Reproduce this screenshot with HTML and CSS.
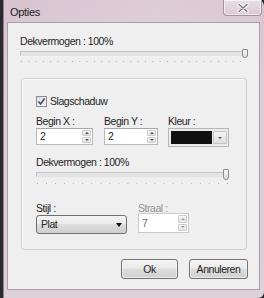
FILE: index.html
```html
<!DOCTYPE html>
<html>
<head>
<meta charset="utf-8">
<link rel="stylesheet" href="styles.css">
</head>
<body>
<div class="window">
  <div class="titlebar">
    <span class="title">Opties</span>
    <div class="close">
      <svg width="12" height="10" viewBox="0 0 12 10"><path d="M2 1.5 L10 8.5 M10 1.5 L2 8.5" stroke="#fff" stroke-width="3.2" stroke-linecap="round"/><path d="M2 1.5 L10 8.5 M10 1.5 L2 8.5" stroke="#7a6a76" stroke-width="1.3" stroke-linecap="round"/></svg>
    </div>
  </div>
  <div class="client">
    <div class="label top-label">Dekvermogen : 100%</div>
    <div class="slider slider-wide">
      <div class="track"></div>
      <div class="thumb"></div>
    </div>
    <div class="ticks ticks-wide"></div>

    <div class="group">
      <div class="check">
        <span class="box"><svg width="9" height="9" viewBox="0 0 9 9"><path d="M1.5 4.5 L3.6 7 L7.6 1.5" fill="none" stroke="#3b4f7a" stroke-width="1.6"/></svg></span>
        <span class="label">Slagschaduw</span>
      </div>
      <div class="row row-top">
        <div class="field">
          <div class="label">Begin X :</div>
          <div class="spin w-x">
            <span class="val">2</span>
            <div class="spinbtns"><span class="up"></span><span class="down"></span></div>
          </div>
        </div>
        <div class="field">
          <div class="label">Begin Y :</div>
          <div class="spin w-y">
            <span class="val">2</span>
            <div class="spinbtns"><span class="up"></span><span class="down"></span></div>
          </div>
        </div>
        <div class="field field-color">
          <div class="label">Kleur :</div>
          <div class="color">
            <span class="swatch"></span>
            <span class="drop"><span class="tri-small"></span></span>
          </div>
        </div>
      </div>
      <div class="label mid-label">Dekvermogen : 100%</div>
      <div class="slider slider-inner">
        <div class="track"></div>
        <div class="thumb"></div>
      </div>
      <div class="ticks ticks-inner"></div>
      <div class="row row-bottom">
        <div class="field">
          <div class="label">Stijl :</div>
          <div class="select"><span class="val">Plat</span><span class="tri"></span></div>
        </div>
        <div class="field disabled">
          <div class="label">Straal :</div>
          <div class="spin w-s">
            <span class="val">7</span>
            <div class="spinbtns"><span class="up"></span><span class="down"></span></div>
          </div>
        </div>
      </div>
    </div>

    <div class="buttons">
      <div class="btn btn-ok">Ok</div>
      <div class="btn btn-cancel">Annuleren</div>
    </div>
  </div>
</div>
</body>
</html>
```

FILE: styles.css
```css
* { box-sizing: border-box; }
html, body { margin: 0; padding: 0; }
body {
  width: 264px;
  height: 298px;
  overflow: hidden;
  background: #2c2a2e;
  font-family: "Liberation Sans", Arial, sans-serif;
  font-size: 10.5px;
  letter-spacing: -0.45px;
  color: #1e1e1e;
}
.window {
  margin-left: 3px;
  width: 261px;
  height: 298px;
  background: linear-gradient(180deg, #d9c3d0 0%, #ddcdd8 30%, #dcd0d9 100%);
  border-left: 1px solid #8d8490;
  padding: 0 4px 8px 3px;
  display: flex;
  flex-direction: column;
  border-radius: 0 6px 6px 0;
}
.titlebar {
  height: 22px;
  flex: none;
  display: flex;
  align-items: flex-start;
  justify-content: space-between;
  background: linear-gradient(90deg, rgba(255,255,255,0) 0%, rgba(255,255,255,0.15) 60%, rgba(255,255,255,0.05) 100%);
}
.title {
  font-size: 11px;
  letter-spacing: -0.3px;
  color: #1b1b1b;
  padding: 6px 0 0 3px;
  line-height: 13px;
}
.close {
  width: 39px;
  height: 16px;
  margin-right: -2px;
  border: 1px solid #a4929f;
  border-top: none;
  border-radius: 0 0 4px 4px;
  background: linear-gradient(180deg, #e9dfe6 0%, #d9c9d4 100%);
  display: flex;
  align-items: center;
  justify-content: center;
  box-shadow: inset 0 0 0 1px rgba(255,255,255,0.55);
}
.client {
  flex: 1;
  background: #efefef;
  border: 1px solid #a9a0a8;
  display: flex;
  flex-direction: column;
  padding: 11px 11px 0 12px;
}
.label { line-height: 14px; white-space: nowrap; }
.slider {
  display: grid;
  align-items: center;
  height: 9px;
}
.slider > * { grid-area: 1 / 1; }
.slider-wide { margin-top: 1px; }
.track {
  height: 5px;
  border: 1px solid #c3c3c3;
  border-bottom-color: #e2e2e2;
  background: #e4e4e4;
  border-radius: 1px;
}
.thumb {
  justify-self: end;
  width: 6px;
  height: 9px;
  border: 1px solid #8a8a8a;
  border-radius: 1px 1px 3px 3px;
  background: linear-gradient(180deg, #fafafa, #dcdcdc);
}
.ticks {
  height: 2px;
  margin-top: 3px;
  background-image: linear-gradient(90deg, #a9a9a9 0 1px, transparent 1px);
  background-repeat: repeat-x;
}
.ticks-wide {
  margin-left: 1px;
  margin-right: 2px;
  background-size: 7.3px 1px;
}
.ticks-inner {
  width: 191px;
  margin-left: 1px;
  background-size: 9.05px 1px;
}
.group {
  margin-top: 15px;
  margin-left: 1px;
  margin-right: 1px;
  border: 1px solid #d0d0d0;
  border-radius: 3px;
  box-shadow: 1px 1px 0 #fafafa inset;
  height: 172px;
  padding: 15px 0 0 14px;
  display: flex;
  flex-direction: column;
}
.check {
  display: flex;
  align-items: center;
  gap: 3px;
}
.box {
  width: 11px;
  height: 11px;
  border: 1px solid #8e8f8f;
  background: linear-gradient(135deg, #dcdcdc, #fafafa);
  display: flex;
  align-items: center;
  justify-content: center;
}
.row { display: flex; }
.row-top { margin-top: 7px; }
.field { display: flex; flex-direction: column; }
.field .label { line-height: 13px; }
.field + .field { margin-left: 11px; }
.field-color { margin-left: 10px !important; }
.spin {
  height: 17px;
  border: 1px solid #b5b7bc;
  border-top-color: #a4a7ad;
  background: #fff;
  display: flex;
  align-items: center;
  justify-content: space-between;
  padding: 0 1px 0 3px;
}
.w-x { width: 57px; }
.w-y { width: 54px; }
.w-s { width: 51px; }
.val { line-height: 13px; }
.spinbtns {
  display: flex;
  flex-direction: column;
  gap: 1px;
  height: 13px;
}
.spinbtns span {
  width: 9px;
  flex: 1;
  border: 1px solid #c9cbcf;
  border-radius: 1px;
  background: linear-gradient(180deg, #f6f6f6, #e4e4e4);
  display: flex;
  align-items: center;
  justify-content: center;
}
.spinbtns .up::after {
  content: "";
  border-left: 2px solid transparent;
  border-right: 2px solid transparent;
  border-bottom: 2px solid #4d4d4d;
}
.spinbtns .down::after {
  content: "";
  border-left: 2px solid transparent;
  border-right: 2px solid transparent;
  border-top: 2px solid #4d4d4d;
}
.color {
  width: 61px;
  height: 19px;
  border: 1px solid #b5b7bc;
  background: #ebebeb;
  display: flex;
  padding: 2px 1px 2px 2px;
  gap: 1px;
}
.swatch {
  flex: 1;
  background: #111;
}
.drop {
  width: 14px;
  border: 1px solid #c6c6c6;
  border-radius: 1px;
  background: linear-gradient(180deg, #f4f4f4, #dedede);
  display: flex;
  align-items: center;
  justify-content: center;
}
.tri-small {
  border-left: 2px solid transparent;
  border-right: 2px solid transparent;
  border-top: 2px solid #555;
}
.mid-label { margin-top: 8px; }
.slider-inner {
  width: 193px;
  height: 11px;
}
.slider-inner .thumb { height: 11px; }
.row-bottom { margin-top: 17px; }
.select {
  width: 91px;
  height: 19px;
  border: 1px solid #707070;
  border-radius: 3px;
  background: linear-gradient(180deg, #f3f3f3 0%, #ebebeb 45%, #dddddd 50%, #cfcfcf 100%);
  display: flex;
  align-items: center;
  justify-content: space-between;
  padding: 0 4px 0 4px;
}
.tri {
  border-left: 3.5px solid transparent;
  border-right: 3.5px solid transparent;
  border-top: 4px solid #111;
}
.disabled .label { color: #8f8f8f; margin-bottom: -2px; }
.disabled .spin { border-color: #c8c9cc; height: 20px; }
.disabled .val { color: #6d6d6d; }
.disabled .spinbtns { height: 16px; }
.disabled .spinbtns span::after { border-top-color: #9a9a9a; border-bottom-color: #9a9a9a; }
.buttons {
  display: flex;
  justify-content: flex-end;
  gap: 11px;
  margin-top: 9px;
}
.btn {
  height: 20px;
  border: 1px solid #707070;
  border-radius: 3px;
  background: linear-gradient(180deg, #f2f2f2 0%, #ebebeb 45%, #dddddd 50%, #cfcfcf 100%);
  box-shadow: inset 0 0 0 1px rgba(255,255,255,0.6);
  display: flex;
  align-items: center;
  justify-content: center;
  line-height: 14px;
}
.btn-ok { width: 57px; }
.btn-cancel { width: 59px; }
```
